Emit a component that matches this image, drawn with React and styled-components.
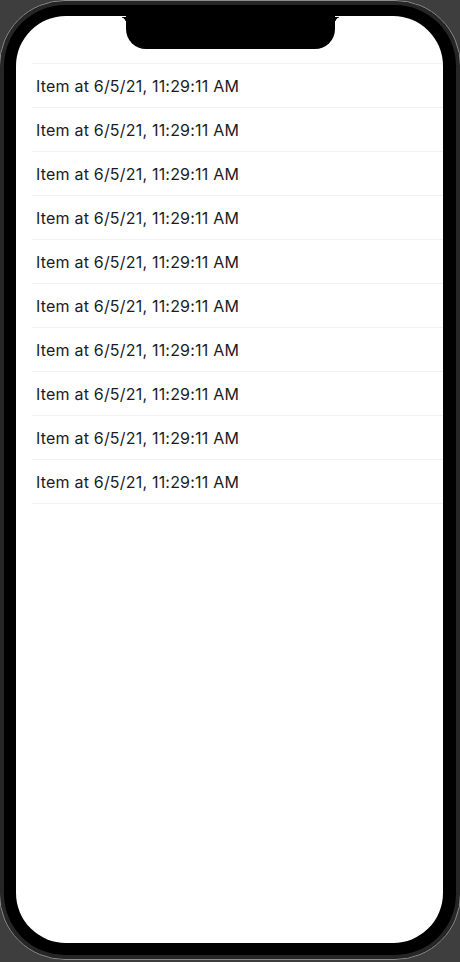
import React from "react";
import styled, { createGlobalStyle } from "styled-components";

const GlobalStyle = createGlobalStyle`
  html, body {
    margin: 0;
    padding: 0;
    background: #3e3e3e;
    overflow: hidden;
  }
  * {
    box-sizing: border-box;
  }
`;

const Frame = styled.div`
  position: relative;
  width: 462px;
  height: 960px;
  margin-left: -1px;
  border: 1px solid #8c8c8c;
  border-radius: 66px;
  background: #000;
  box-shadow: inset 0 0 0 4px #262626;
  padding: 15px 17px 16px 16px;
`;

const Screen = styled.div`
  height: 100%;
  background: #fff;
  border-radius: 50px;
  overflow: hidden;
`;

const Notch = styled.div`
  position: absolute;
  top: 15px;
  left: 126px;
  width: 209px;
  height: 33px;
  background: #000;
  border-radius: 0 0 20px 20px;

  &::before,
  &::after {
    content: "";
    position: absolute;
    top: 1px;
    width: 7px;
    height: 7px;
  }
  &::before {
    left: -7px;
    background: radial-gradient(circle at 0 100%, transparent 7px, #000 7.5px);
  }
  &::after {
    right: -7px;
    background: radial-gradient(circle at 100% 100%, transparent 7px, #000 7.5px);
  }
`;

const List = styled.ul`
  list-style: none;
  margin: 47px 0 0 16px;
  padding: 0;
  border-bottom: 1px solid #f1f1f1;
`;

const Row = styled.li`
  height: 44px;
  display: flex;
  align-items: center;
  padding-left: 4px;
  border-top: 1px solid #f1f1f1;
  font-family: Inter, "Liberation Sans", sans-serif;
  font-size: 16px;
  letter-spacing: 0.2px;
  color: #1c1c1e;
`;

const items = Array.from({ length: 10 }, () => "Item at 6/5/21, 11:29:11 AM");

export default function App() {
  return (
    <>
      <GlobalStyle />
      <Frame>
        <Screen>
          <List>
            {items.map((label, i) => (
              <Row key={i}>{label}</Row>
            ))}
          </List>
        </Screen>
        <Notch />
      </Frame>
    </>
  );
}
